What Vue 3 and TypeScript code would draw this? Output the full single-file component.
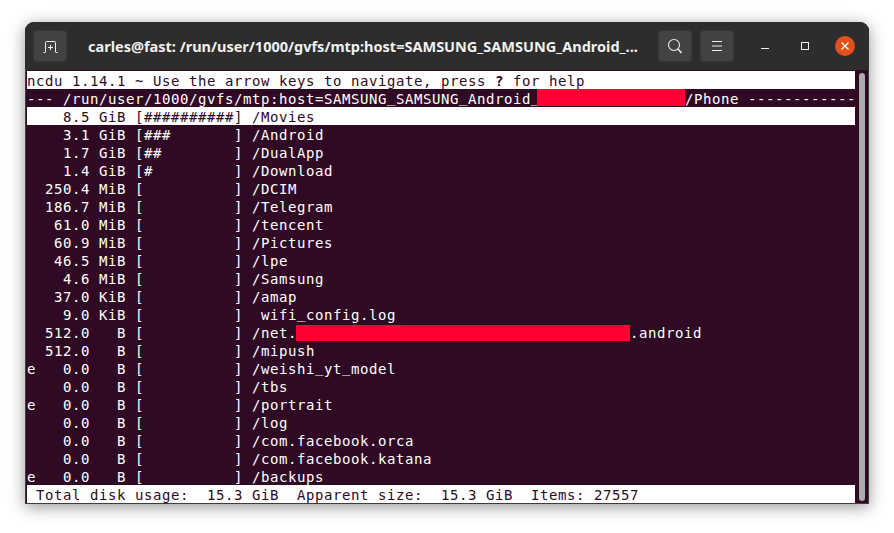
<script setup lang="ts">
const rows: { size: string; path: string; after?: string }[] = [
  { size: '    3.1 GiB [###       ]', path: ' /Android' },
  { size: '    1.7 GiB [##        ]', path: ' /DualApp' },
  { size: '    1.4 GiB [#         ]', path: ' /Download' },
  { size: '  250.4 MiB [          ]', path: ' /DCIM' },
  { size: '  186.7 MiB [          ]', path: ' /Telegram' },
  { size: '   61.0 MiB [          ]', path: ' /tencent' },
  { size: '   60.9 MiB [          ]', path: ' /Pictures' },
  { size: '   46.5 MiB [          ]', path: ' /lpe' },
  { size: '    4.6 MiB [          ]', path: ' /Samsung' },
  { size: '   37.0 KiB [          ]', path: ' /amap' },
  { size: '    9.0 KiB [          ]', path: '  wifi_config.log' },
  { size: '  512.0   B [          ]', path: ' /net.', after: '.android' },
  { size: '  512.0   B [          ]', path: ' /mipush' },
  { size: 'e   0.0   B [          ]', path: ' /weishi_yt_model' },
  { size: '    0.0   B [          ]', path: ' /tbs' },
  { size: 'e   0.0   B [          ]', path: ' /portrait' },
  { size: '    0.0   B [          ]', path: ' /log' },
  { size: '    0.0   B [          ]', path: ' /com.facebook.orca' },
  { size: '    0.0   B [          ]', path: ' /com.facebook.katana' },
  { size: 'e   0.0   B [          ]', path: ' /backups' },
]
const helpStart = 'ncdu 1.14.1 ~ Use the arrow keys to navigate, press '
const helpEnd = ' for help'
const crumbStart = '--- /run/user/1000/gvfs/mtp:host=SAMSUNG_SAMSUNG_Android_'
const crumbEnd = '/Phone ------------'
const selected = '    8.5 GiB [##########] /Movies'
const footer = ' Total disk usage:  15.3 GiB  Apparent size:  15.3 GiB  Items: 27557'
const parts = (s: string): string[] => s.split('_')
</script>

<template>
  <div class="page">
    <div class="window">
      <header class="titlebar">
        <button class="btn new-tab" aria-label="New tab">
          <svg width="16" height="16" viewBox="0 0 16 16" fill="none" stroke="#eee" stroke-width="1">
            <path d="M3.5 14V4.5a1 1 0 0 1 1-1h8a1 1 0 0 1 1 1V14M1.5 14.5h2M13.5 14.5h2M8.5 7v5M6 9.5h5" />
          </svg>
        </button>
        <div class="title">carles@fast: /run/user/1000/gvfs/mtp:host=SAMSUNG_SAMSUNG_Android_...</div>
        <button class="btn" aria-label="Search">
          <svg width="16" height="16" viewBox="0 0 16 16" fill="none" stroke="#eee" stroke-width="1.1">
            <circle cx="7" cy="7" r="5.5" />
            <path d="M11 11l3.5 4" stroke-width="1.5" />
          </svg>
        </button>
        <button class="btn menu" aria-label="Menu">
          <svg width="16" height="16" viewBox="0 0 16 16" fill="none" stroke="#eee" stroke-width="1">
            <path d="M3 3.5h10M3 8h10M3 12.5h10" />
          </svg>
        </button>
        <div class="controls">
          <span class="ctl"><svg width="14" height="14" viewBox="0 0 14 14" stroke="#eee" fill="none"><path d="M3 9.5h8" stroke-width="1" /></svg></span>
          <span class="ctl"><svg width="14" height="14" viewBox="0 0 14 14" stroke="#eee" fill="none"><rect x="3.5" y="3.5" width="7" height="7" stroke-width="1" /></svg></span>
          <span class="ctl close"><svg width="12" height="12" viewBox="0 0 12 12" stroke="#fff" fill="none"><path d="M2.5 2.5l7 7M9.5 2.5l-7 7" stroke-width="1.3" /></svg></span>
        </div>
      </header>
      <div class="body">
        <div class="term">
          <div class="line inv">{{ helpStart }}<b>?</b>{{ helpEnd }}</div>
          <div class="line"><template v-for="(p, i) in parts(crumbStart)" :key="i"><span v-if="i" class="us">_</span>{{ p }}</template><span class="redact r1"></span>{{ crumbEnd }}</div>
          <div class="line inv">{{ selected }}</div>
          <div v-for="r in rows" :key="r.path" class="line">{{ r.size }}<template v-for="(p, i) in parts(r.path)" :key="i"><span v-if="i" class="us">_</span>{{ p }}</template><template v-if="r.after"><span class="redact r2"></span>{{ r.after }}</template></div>
          <div class="line inv">{{ footer }}</div>
        </div>
        <div class="scroll"><div class="thumb"></div></div>
      </div>
    </div>
  </div>
</template>

<style>
html, body { background: #fff; }
</style>

<style scoped>
.page {
  width: 894px;
  height: 533px;
  box-sizing: border-box;
  padding: 22px 25px 29px;
  background: #fff;
  overflow: hidden;
}
.window {
  width: 844px;
  height: 482px;
  border-radius: 9px 9px 0 0;
  overflow: hidden;
  background: #300a24;
  box-shadow: 0 3px 16px rgba(0, 0, 0, 0.42);
  display: flex;
  flex-direction: column;
}
.titlebar {
  height: 48px;
  flex: none;
  background: #2d2d2d;
  display: flex;
  align-items: center;
  padding: 0 14px 0 8px;
  box-sizing: border-box;
}
.btn {
  width: 34px;
  height: 32px;
  padding: 0;
  background: #424242;
  border: 1px solid #383838;
  border-radius: 4px;
  display: flex;
  align-items: center;
  justify-content: center;
  flex: none;
}
.menu { margin-left: 8px; }
.title {
  flex: 1;
  min-width: 0;
  padding-left: 21px;
  color: #f0f0f0;
  font: 700 14.5px/20px "Noto Sans", sans-serif;
  white-space: nowrap;
  overflow: hidden;
}
.controls {
  display: flex;
  align-items: center;
  gap: 20px;
  margin-left: 21px;
}
.ctl {
  width: 20px;
  height: 20px;
  display: flex;
  align-items: center;
  justify-content: center;
}
.close {
  border-radius: 50%;
  background: #e2501c;
}
.body {
  flex: 1;
  display: flex;
  min-height: 0;
  background: #300a24;
  border: solid #3d3d3d;
  border-width: 0 1px 1px;
}
.term {
  width: 829px;
  padding: 1px 0 0 1px;
  box-sizing: border-box;
  font: 14px/20px "DejaVu Sans Mono", monospace;
  letter-spacing: 0.57px;
  color: #fff;
}
.line {
  width: 828px;
  height: 18px;
  white-space: pre;
}
.inv {
  background: #fff;
  color: #300a24;
}
.us {
  line-height: 0;
  vertical-align: 2px;
}
.redact {
  display: inline-block;
  background: #ff0033;
  vertical-align: top;
}
.r1 { width: 148px; height: 17px; margin-left: -3px; }
.r2 { width: 334px; height: 16px; margin: 2px 0 0 -1px; }
.scroll {
  flex: 1;
  padding: 3px 0 2px 4px;
  box-sizing: border-box;
}
.thumb {
  width: 6px;
  height: 100%;
  border-radius: 3px;
  background: #acacac;
}
</style>
